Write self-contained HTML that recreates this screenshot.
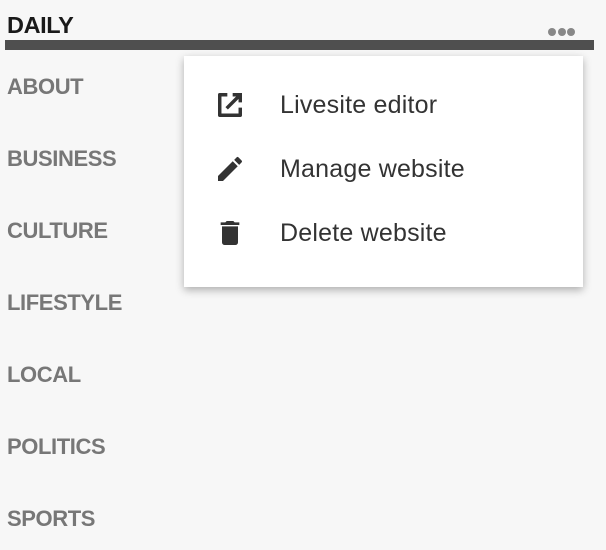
<!DOCTYPE html>
<html><head><style>
body{margin:0;width:606px;height:550px;background:#f7f7f7;font-family:"Liberation Sans",sans-serif;position:relative;overflow:hidden}
.t{position:absolute;left:7px;top:12px;font-weight:bold;font-size:23.5px;color:#1a1a1a;letter-spacing:-0.4px}
.bar{position:absolute;left:5px;top:40px;width:589px;height:10px;background:#4f4f4f}
.dots{position:absolute;left:548px;top:23px}
.dots span{display:inline-block;width:8px;height:8px;border-radius:50%;background:#888;margin-right:1.5px}
.nav{position:absolute;left:7px;font-weight:bold;font-size:22px;color:#777;letter-spacing:-0.4px}
.menu{position:absolute;left:184px;top:56px;width:399px;height:231px;background:#fff;box-shadow:0 3px 8px rgba(0,0,0,.3)}
.it{position:absolute;left:96px;font-size:25px;color:#333;letter-spacing:0.2px}
.ic{position:absolute;left:30px;width:32px;height:32px}
</style></head><body>
<div class="t">DAILY</div>
<div class="dots"><span></span><span></span><span></span></div>
<div class="bar"></div>
<div class="nav" style="top:74px">ABOUT</div>
<div class="nav" style="top:146px">BUSINESS</div>
<div class="nav" style="top:218px">CULTURE</div>
<div class="nav" style="top:290px">LIFESTYLE</div>
<div class="nav" style="top:362px">LOCAL</div>
<div class="nav" style="top:434px">POLITICS</div>
<div class="nav" style="top:506px">SPORTS</div>
<div class="menu">
<svg class="ic" style="top:33px" viewBox="0 0 24 24"><path fill="none" stroke="#333" stroke-width="2.6" stroke-linejoin="round" d="M10 4.3H4.3v15.4h15.4V14"/><path fill="none" stroke="#333" stroke-width="2.6" d="M14 4.3h5.7V10M19.7 4.3L9.5 14.5"/></svg>
<div class="it" style="top:35px">Livesite editor</div>
<svg class="ic" style="top:97px" viewBox="0 0 24 24"><path fill="#333" d="M3 17.25V21h3.75L17.81 9.94l-3.75-3.75L3 17.25zM20.71 7.04a1 1 0 0 0 0-1.41l-2.34-2.34a1 1 0 0 0-1.41 0l-1.83 1.83 3.75 3.75 1.83-1.83z"/></svg>
<div class="it" style="top:99px">Manage website</div>
<svg class="ic" style="top:161px" viewBox="0 0 24 24"><path fill="#333" d="M6 19a2 2 0 0 0 2 2h8a2 2 0 0 0 2-2V7H6v12zM19 4h-3.5l-1-1h-5l-1 1H5v2h14V4z"/></svg>
<div class="it" style="top:163px">Delete website</div>
</div>
</body></html>
